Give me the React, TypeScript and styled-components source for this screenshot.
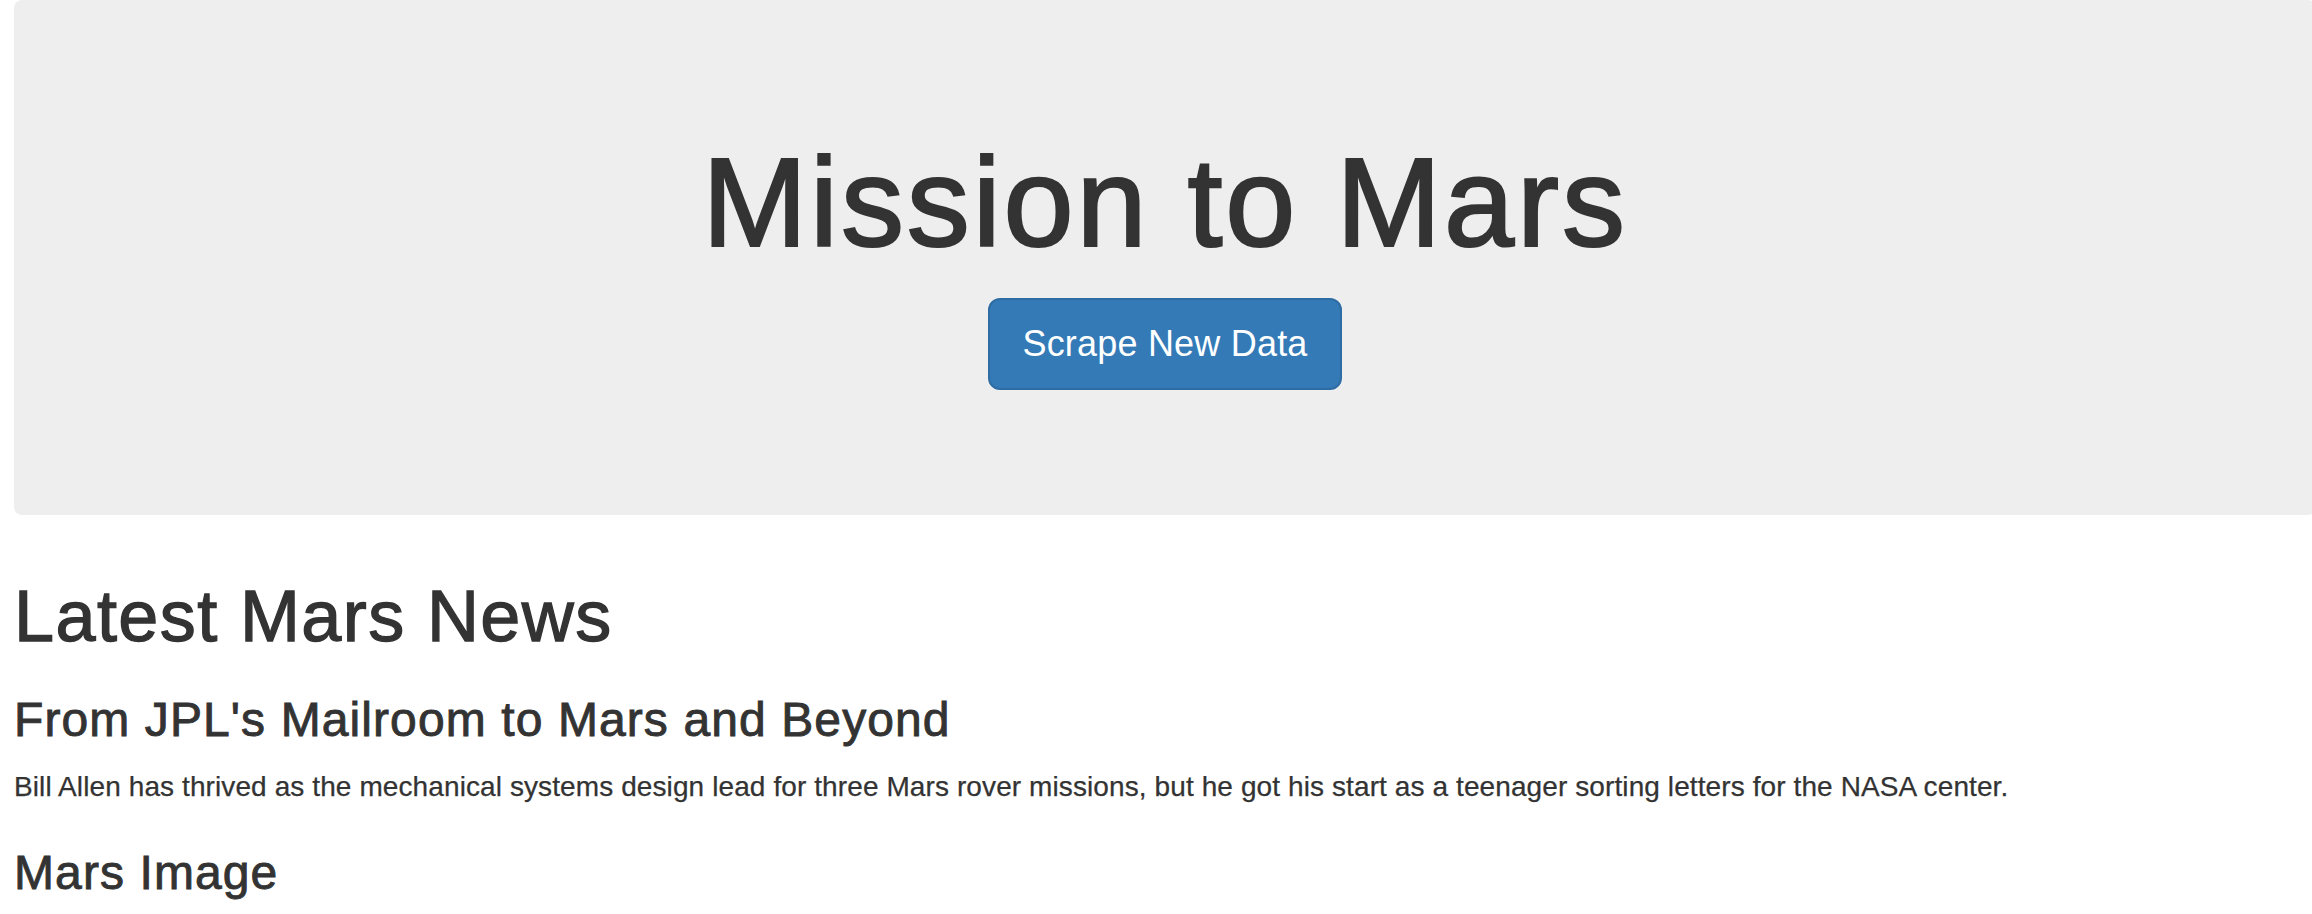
import React from "react";
import styled, { createGlobalStyle } from "styled-components";

const GlobalStyle = createGlobalStyle`
  html, body {
    margin: 0;
    padding: 0;
    background: #ffffff;
    overflow-x: hidden;
  }
  body {
    font-family: "Liberation Sans", Arial, Helvetica, sans-serif;
    font-size: 28px;
    line-height: 1.42857;
    color: #333333;
  }
  * { box-sizing: border-box; }
`;

const Container = styled.div`
  padding: 0 0 0 14px;
`;

const Jumbotron = styled.header`
  width: calc(100% + 4px);
  background: #eeeeee;
  border-radius: 8px;
  padding: 96px 0 96px;
  display: flex;
  flex-direction: column;
  align-items: center;
  text-align: center;
`;

const HeroTitle = styled.h1`
  margin: 38px 0 20px;
  font-size: 126px;
  font-weight: 500;
  line-height: 1.1;
  letter-spacing: 2.9px;
  color: #333333;
  -webkit-text-stroke: 2.2px #333333;
`;

const ButtonRow = styled.p`
  margin: 5px 0 29px;
  display: flex;
  justify-content: center;
`;

const PrimaryButton = styled.a`
  display: inline-block;
  padding: 20px 32px;
  font-size: 36px;
  line-height: 1.3333;
  letter-spacing: 0.2px;
  color: #ffffff;
  background: #337ab7;
  border: 2px solid #2e6da4;
  border-radius: 12px;
  text-decoration: none;
  cursor: pointer;
  white-space: nowrap;
`;

const SectionTitle = styled.h1`
  margin: 62px 0 38px;
  font-size: 72px;
  font-weight: 500;
  line-height: 1.1;
  letter-spacing: 1.4px;
  -webkit-text-stroke: 1.3px #333333;
`;

const SubTitle = styled.h3<{ $top?: number }>`
  margin: ${(p) => p.$top ?? 40}px 0 20px;
  font-size: 48px;
  font-weight: 500;
  line-height: 1.1;
  letter-spacing: 1.1px;
  -webkit-text-stroke: 0.9px #333333;
`;

const Paragraph = styled.p`
  margin: 0 0 20px;
  font-size: 28px;
  line-height: 40px;
  letter-spacing: 0.1px;
  -webkit-text-stroke: 0.25px #333333;
`;

export default function App() {
  return (
    <>
      <GlobalStyle />
      <Container>
        <Jumbotron>
          <HeroTitle>Mission to Mars</HeroTitle>
          <ButtonRow>
            <PrimaryButton role="button">Scrape New Data</PrimaryButton>
          </ButtonRow>
        </Jumbotron>
        <SectionTitle>Latest Mars News</SectionTitle>
        <SubTitle $top={0}>From JPL's Mailroom to Mars and Beyond</SubTitle>
        <Paragraph>
          Bill Allen has thrived as the mechanical systems design lead for three Mars rover
          missions, but he got his start as a teenager sorting letters for the NASA center.
        </Paragraph>
        <SubTitle>Mars Image</SubTitle>
      </Container>
    </>
  );
}
